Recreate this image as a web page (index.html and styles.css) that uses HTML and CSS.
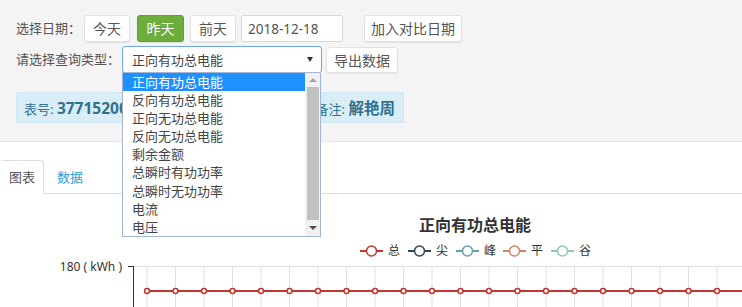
FILE: index.html
```html
<!DOCTYPE html>
<html>
<head>
    <meta charset="utf-8">
    <title>电能查询</title>
    <link rel="stylesheet" href="styles.css">
</head>
<body>
    <div class="toolbar">
        <div class="row">
            <span class="label label-date">选择日期：</span>
            <button class="btn">今天</button>
            <button class="btn btn-active">昨天</button>
            <button class="btn">前天</button>
            <input class="date-input" type="text" value="2018-12-18">
            <button class="btn btn-compare">加入对比日期</button>
        </div>
        <div class="row row-type">
            <span class="label label-type">请选择查询类型：</span>
            <div class="type-select">
                <div class="select-box">
                    <span>正向有功总电能</span>
                    <span class="select-arrow"></span>
                </div>
                <!-- open option list, lies over the info box and tabs -->
                <div class="options">
                    <ul class="option-list">
                        <li class="selected">正向有功总电能</li>
                        <li>反向有功总电能</li>
                        <li>正向无功总电能</li>
                        <li>反向无功总电能</li>
                        <li>剩余金额</li>
                        <li>总瞬时有功功率</li>
                        <li>总瞬时无功功率</li>
                        <li>电流</li>
                        <li>电压</li>
                    </ul>
                    <div class="scrollbar">
                        <span class="scroll-up"></span>
                        <span class="scroll-thumb"></span>
                        <span class="scroll-down"></span>
                    </div>
                </div>
            </div>
            <button class="btn btn-export">导出数据</button>
        </div>
        <div class="info-box">
            <span>表号: <b>37715200</b></span>
            <span>备注: <b>解艳周</b></span>
        </div>
    </div>

    <div class="tabs">
        <span class="tab active">图表</span>
        <span class="tab">数据</span>
    </div>

    <div class="chart">
        <svg id="chartSvg" width="742" height="113" viewBox="0 0 742 113">
            <text x="475" y="37" class="chart-title">正向有功总电能</text>
            <g id="legend"></g>
            <text x="122" y="77" class="axis-label">180 ( kWh )</text>
            <line x1="133" y1="72.5" x2="742" y2="72.5" class="grid-line"/>
            <g id="gridLines"></g>
            <line x1="133.5" y1="72" x2="133.5" y2="113" class="axis-line"/>
            <line x1="128" y1="72.5" x2="133.5" y2="72.5" class="axis-line"/>
            <line x1="147" y1="97" x2="742" y2="97" class="series-line"/>
            <g id="points"></g>
        </svg>
    </div>

    <script type="text/javascript">
        const ns = 'http://www.w3.org/2000/svg';
        const legendItems = [
            ['总', '#c23531', 360], ['尖', '#2f4554', 408], ['峰', '#61a0a8', 456],
            ['平', '#d48265', 503], ['谷', '#91c7ae', 551]
        ];
        const legend = document.getElementById('legend');
        legendItems.forEach(function(item) {
            const x = item[2];
            const line = document.createElementNS(ns, 'line');
            line.setAttribute('x1', x); line.setAttribute('x2', x + 23);
            line.setAttribute('y1', 57); line.setAttribute('y2', 57);
            line.setAttribute('stroke', item[1]); line.setAttribute('stroke-width', 2);
            legend.appendChild(line);
            const dot = document.createElementNS(ns, 'circle');
            dot.setAttribute('cx', x + 11.5); dot.setAttribute('cy', 57); dot.setAttribute('r', 5);
            dot.setAttribute('fill', '#fff'); dot.setAttribute('stroke', item[1]);
            dot.setAttribute('stroke-width', 1.5);
            legend.appendChild(dot);
            const label = document.createElementNS(ns, 'text');
            label.setAttribute('x', x + 28); label.setAttribute('y', 61);
            label.setAttribute('class', 'legend-text');
            label.textContent = item[0];
            legend.appendChild(label);
        });

        const grid = document.getElementById('gridLines');
        const points = document.getElementById('points');
        for (let i = 0; i < 22; i++) {
            const x = 147 + i * 28.5;
            const g = document.createElementNS(ns, 'line');
            g.setAttribute('x1', x); g.setAttribute('x2', x);
            g.setAttribute('y1', 72); g.setAttribute('y2', 113);
            g.setAttribute('class', 'grid-line');
            grid.appendChild(g);
            const p = document.createElementNS(ns, 'circle');
            p.setAttribute('cx', x); p.setAttribute('cy', 97); p.setAttribute('r', 2.5);
            p.setAttribute('class', 'series-point');
            points.appendChild(p);
        }
    </script>
</body>
</html>
```

FILE: styles.css
```css
body {
    margin: 0;
    font-family: "Noto Sans", "Noto Sans CJK SC", sans-serif;
    font-size: 13px;
    color: #555;
    background-color: #fff;
}

.toolbar {
    background-color: #f4f4f4;
    border-bottom: 1px solid #e6e6e6;
    padding: 15px 0 18px 16px;
}

.row {
    display: flex;
    align-items: center;
}

.row-type {
    margin-top: 4px;
}

.label {
    color: #555;
    line-height: 27px;
}

.label-date {
    width: 68px;
}

.label-type {
    width: 106px;
}

.btn {
    box-sizing: border-box;
    height: 27px;
    padding: 0 8px;
    margin-right: 6px;
    border: 1px solid #e2e2e2;
    border-radius: 3px;
    background-color: #fff;
    color: #555;
    font-family: inherit;
    font-size: 14px;
    line-height: 25px;
    box-shadow: 0 1px 1px rgba(0, 0, 0, .08);
}

.btn-active {
    background-color: #6cad3c;
    border-color: #62a032;
    color: #fff;
    width: 47px;
    margin-left: 1px;
}

.btn-compare {
    margin-left: 21px;
    padding: 0 6px;
}

.btn-export {
    height: 26px;
    margin-left: 4px;
    padding: 0 7px;
}

.date-input {
    box-sizing: border-box;
    width: 102px;
    height: 27px;
    margin-left: -1px;
    padding: 0 6px;
    border: 1px solid #d6d6d6;
    border-radius: 3px;
    font-family: inherit;
    font-size: 13.5px;
    color: #555;
}

.type-select {
    position: relative;
}

.select-box {
    box-sizing: border-box;
    width: 200px;
    height: 27px;
    padding: 0 9px;
    border: 1px solid #6ea6e6;
    border-radius: 3px;
    background-color: #fff;
    display: flex;
    align-items: center;
    justify-content: space-between;
    color: #444;
}

.select-arrow {
    width: 0;
    height: 0;
    border-left: 3px solid transparent;
    border-right: 3px solid transparent;
    border-top: 5px solid #333;
    margin-right: -1px;
}

.options {
    position: absolute;
    left: 0;
    top: 26px;
    z-index: 10;
    box-sizing: border-box;
    width: 199px;
    height: 165px;
    border: 1px solid #a3b6d6;
    background-color: #fff;
    display: flex;
}

.option-list {
    list-style: none;
    margin: 0;
    padding: 0;
    flex: 1;
}

.option-list li {
    height: 18.1px;
    line-height: 18px;
    padding-left: 9px;
    color: #444;
    white-space: nowrap;
}

.option-list li.selected {
    background-color: #1e90ff;
    color: #fff;
}

.scrollbar {
    width: 15px;
    background-color: #f1f1f1;
    display: flex;
    flex-direction: column;
    align-items: center;
}

.scroll-up,
.scroll-down {
    width: 0;
    height: 0;
    border-left: 4px solid transparent;
    border-right: 4px solid transparent;
}

.scroll-up {
    margin: 5px 0 5px;
    border-bottom: 4px solid #a3a3a3;
}

.scroll-thumb {
    width: 12px;
    height: 133px;
    background-color: #c1c1c1;
}

.scroll-down {
    margin-top: 6px;
    border-top: 4px solid #505050;
}

.info-box {
    box-sizing: border-box;
    width: 388px;
    height: 31px;
    margin-top: 19px;
    padding: 0 8px 0 7px;
    border: 1px solid #cfe8f3;
    background-color: #d9edf7;
    color: #31708f;
    display: flex;
    align-items: center;
    justify-content: space-between;
    white-space: nowrap;
    overflow: hidden;
}

.info-box b {
    font-size: 15.5px;
}

.tabs {
    display: flex;
    margin-top: 18px;
    border-bottom: 1px solid #ddd;
}

.tab {
    height: 32px;
    line-height: 32px;
    padding: 0 8px;
    margin-bottom: -1px;
    margin-right: 2px;
    border: 1px solid transparent;
    border-radius: 4px 4px 0 0;
    color: #2a9fd6;
}

.tab + .tab {
    padding: 0 10px;
}

.tab.active {
    border-color: #ddd;
    border-left-color: transparent;
    border-bottom-color: #fff;
    background-color: #fff;
    color: #555;
}

.chart {
    height: 113px;
    overflow: hidden;
}

.chart-title {
    fill: #333;
    font-size: 16px;
    font-weight: bold;
    text-anchor: middle;
}

.legend-text {
    fill: #333;
    font-size: 12px;
}

.axis-label {
    fill: #333;
    font-size: 12px;
    text-anchor: end;
}

.axis-line {
    stroke: #333;
    stroke-width: 1;
}

.grid-line {
    stroke: #e0e0e0;
    stroke-width: 1;
}

.series-line {
    stroke: #c23531;
    stroke-width: 2;
}

.series-point {
    fill: #fff;
    stroke: #c23531;
    stroke-width: 1.5;
}
```
